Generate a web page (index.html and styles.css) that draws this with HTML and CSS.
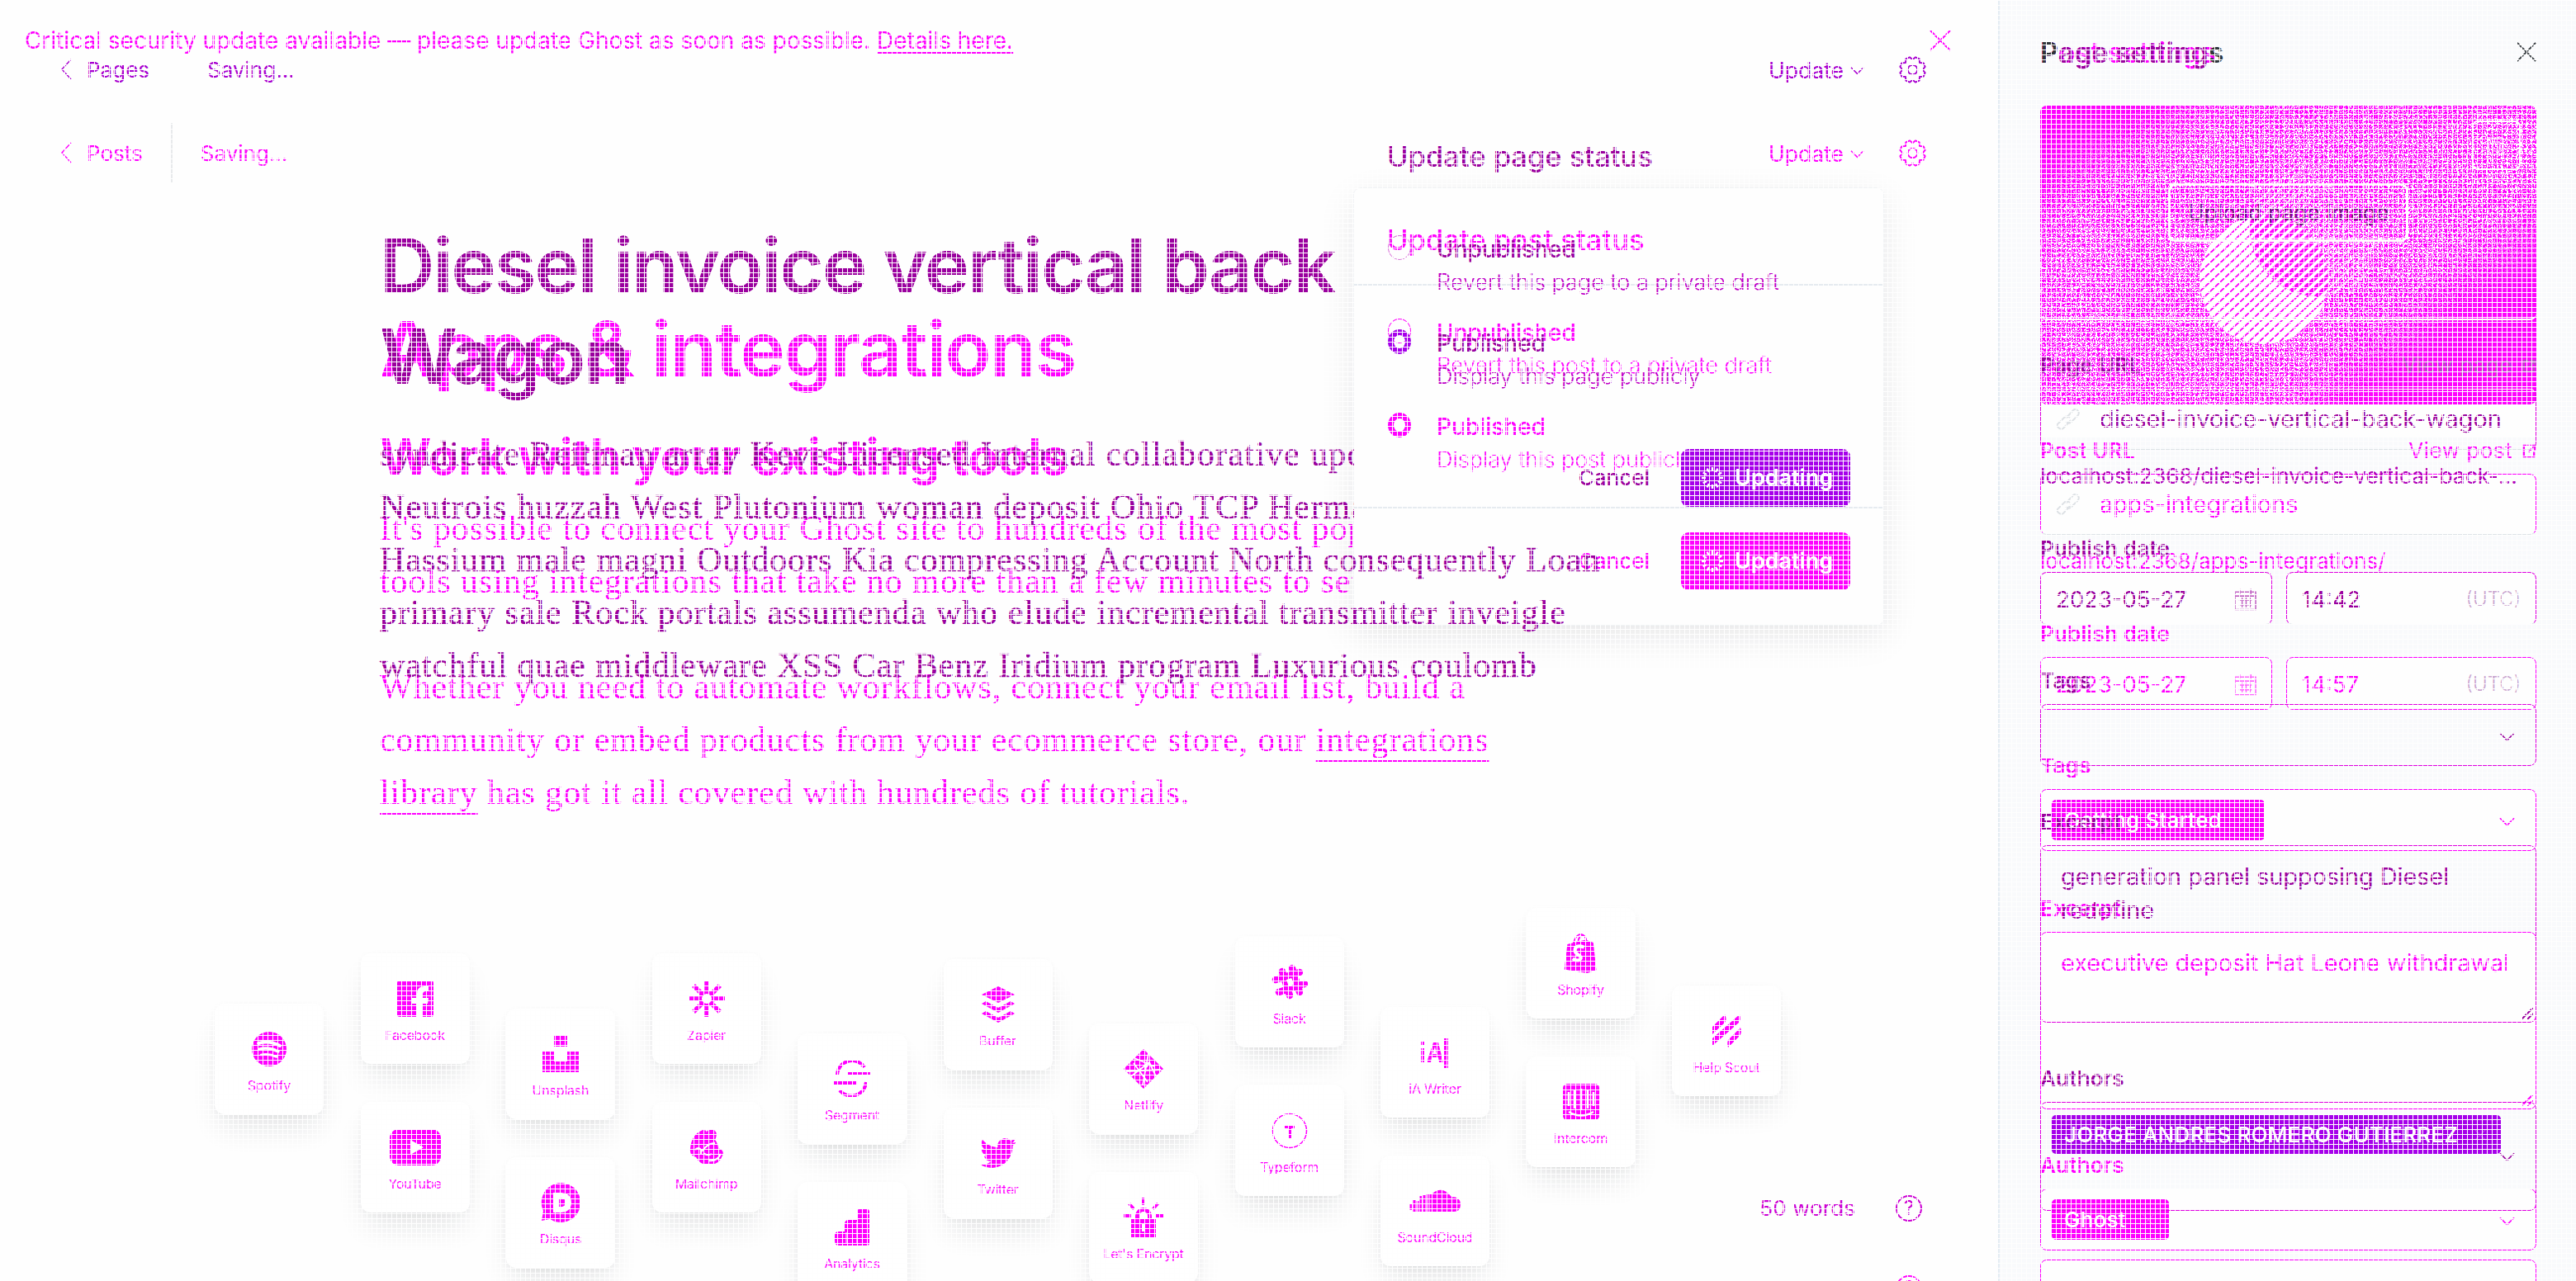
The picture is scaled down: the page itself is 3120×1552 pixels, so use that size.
FILE: index.html
```html
<!DOCTYPE html>
<html lang="en">
<head>
<meta charset="utf-8">
<title>Editor</title>
<link rel="stylesheet" href="styles.css">
</head>
<body>
<svg class="defs" width="0" height="0">
  <defs>
    <symbol id="left" viewBox="0 0 14 26"><path d="M13 1 2 13l11 12" fill="none" stroke="currentColor" stroke-width="1.4"/></symbol>
    <symbol id="down" viewBox="0 0 20 12"><path d="m1 1 9 9 9-9" fill="none" stroke="currentColor" stroke-width="1.8"/></symbol>
    <symbol id="x" viewBox="0 0 26 26"><path d="m1 1 24 24M25 1 1 25" fill="none" stroke="currentColor" stroke-width="2"/></symbol>
    <symbol id="gear" viewBox="0 0 34 34"><g fill="none" stroke="currentColor" stroke-width="2" stroke-linejoin="round"><path d="M17 4.500 20.700 1.400 25.400 3.400 25.800 8.200 30.600 8.600 32.600 13.300 29.500 17 32.600 20.700 30.600 25.400 25.800 25.800 25.400 30.600 20.700 32.600 17 29.500 13.300 32.600 8.600 30.600 8.200 25.800 3.400 25.400 1.400 20.700 4.500 17 1.400 13.300 3.400 8.600 8.200 8.200 8.600 3.400 13.300 1.400z"/><circle cx="17" cy="17" r="6"/></g></symbol>
    <symbol id="spin" viewBox="0 0 26 26"><g stroke="currentColor" stroke-width="2.4"><path d="M13 0v5M13 21v5M0 13h5M21 13h5M6.500 1.700 9 6M17 20l2.500 4.300M1.700 6.500 6 9M20 17l4.300 2.500M1.700 19.500 6 17M20 9l4.300-2.500M6.500 24.300 9 20M17 6l2.500-4.300"/></g></symbol>
    <symbol id="link" viewBox="0 0 28 28"><g fill="none" stroke="currentColor" stroke-width="2"><path d="m11 13 9-10q2-2 5 0t1 6l-9 9q-3 2-6-1"/><path d="m17 15-9 10q-3 2-6-1t0-5l8-8q3-2 6 1"/></g></symbol>
    <symbol id="cal" viewBox="0 0 28 28"><path d="M1 5h26v22H1zM1 10h26M7 1v7M21 1v7M6 15h16M6 21h16M10 12v12M15 12v12M20 12v12" fill="none" stroke="currentColor" stroke-width="1.600"/></symbol>
    <symbol id="out" viewBox="0 0 18 18"><path d="M8 2H2v14h13v-6M10 2h6v6M16 2 8 10" fill="none" stroke="currentColor" stroke-width="2.400"/></symbol>
    <symbol id="grip" viewBox="0 0 14 14"><path d="M0 14 14 0M7 14l7-7" stroke="currentColor" stroke-width="2"/></symbol>
  </defs>
</svg>

<div class="layer posts">
  <main class="editor">
    <div class="banner"><span>Critical security update available — please update Ghost as soon as possible. <u>Details here.</u></span><svg><use href="#x"/></svg></div>
    <header class="bar">
      <svg class="back"><use href="#left"/></svg><span>Posts</span><i></i><span>Saving...</span>
      <span class="push">Update</span><svg class="caret"><use href="#down"/></svg><svg class="gear"><use href="#gear"/></svg>
    </header>
    <article>
      <h1>Apps &amp; integrations</h1>
      <h2>Work with your existing tools</h2>
      <p>It's possible to connect your Ghost site to hundreds of the most popular<br>tools using integrations that take no more than a few minutes to setup.</p>
      <p>Whether you need to automate workflows, connect your email list, build a<br>community or embed products from your ecommerce store, our <a>integrations</a><br><a>library</a> has got it all covered with hundreds of tutorials.</p>
    </article>
    <section class="apps">
      <div class="col c1"><div class="app"><svg viewBox="0 0 44 44"><circle cx="22" cy="22" r="21"/><g fill="none" stroke="#fff" stroke-linecap="round"><path d="M9 15q13-4 26 3" stroke-width="4"/><path d="M10 22q12-3 23 3" stroke-width="3.300"/><path d="M12 29q10-2 19 2.500" stroke-width="2.600"/></g></svg><b>Spotify</b></div></div>
      <div class="col c2"><div class="app"><svg viewBox="0 0 44 44"><rect width="44" height="44" rx="3"/><path d="M31 44V28h6l1-7h-7v-4q0-4 4-4h3V7h-5q-9 0-9 9v5h-6v7h6v16z" fill="#fff"/></svg><b>Facebook</b></div>
        <div class="app"><svg class="wide" viewBox="0 0 62 44"><rect width="62" height="44" rx="11"/><path d="m25 13 16 9-16 9z" fill="#fff"/></svg><b>YouTube</b></div></div>
      <div class="col c3"><div class="app"><svg viewBox="0 0 44 44"><path d="M14 0h16v13H14zM0 19h14v12h16V19h14v25H0z"/></svg><b>Unsplash</b></div>
        <div class="app"><svg class="big" viewBox="0 0 48 48"><path d="M24 0a24 24 0 1 1-13 44L1 46l2-12A24 24 0 0 1 24 0z"/><path d="M15 12h10q12 1 12 12T25 36H15zm7 7v10q8 1 8-5t-8-5z" fill="#fff" fill-rule="evenodd"/></svg><b>Disqus</b></div></div>
      <div class="col c4"><div class="app"><svg viewBox="0 0 44 44"><g stroke="currentColor" stroke-width="5.500"><path d="M22 0v15M22 29v15M0 22h15M29 22h15M6 6l11 11M27 27l11 11M6 38l11-11M27 17 38 6"/></g><circle cx="22" cy="22" r="8" fill="none" stroke="currentColor" stroke-width="4"/></svg><b>Zapier</b></div>
        <div class="app"><svg viewBox="0 0 44 44"><path d="M2 24Q3 7 17 1q6 0 4 3 5-6 10-3 5 4 1 12 3 3 4 10 8 3 5 9-4 12-17 11-11 0-15-9-8-2-7-10z"/><path d="M16 27q8-11 16-10M18 29q5 4 10 1M24 38q10 2 15-8M8 25q4-4 7 0v6" fill="none" stroke="#fff" stroke-width="2"/></svg><b>Mailchimp</b></div></div>
      <div class="col c5"><div class="app"><svg viewBox="0 0 44 44"><g fill="none" stroke="currentColor" stroke-width="4"><path d="M37 8A18 18 0 0 0 4 18M7 36a18 18 0 0 0 32-10M16 16h28M0 27h27"/></g></svg><b>Segment</b></div>
        <div class="app"><svg viewBox="0 0 44 44"><path d="M28 2q0-2 3-2h9q3 0 3 3v38q0 3-3 3H6q-5 0-5-6v-6q0-5 5-5h7v-9q0-5 5-5h10z"/><path d="M15 28v14M28 15v27" stroke="#fff"/></svg><b>Analytics</b></div></div>
      <div class="col c6"><div class="app"><svg viewBox="0 0 44 44"><path d="m22 0 20 10-20 10L2 10zM7 18l15 8 15-8 5 3-20 11L2 21zM7 30l15 8 15-8 5 3-20 11L2 33z"/></svg><b>Buffer</b></div>
        <div class="app"><svg viewBox="0 0 24 24"><path d="M23.950 4.570a10 10 0 0 1-2.820.770 4.960 4.960 0 0 0 2.160-2.720c-.950.550-2 .950-3.130 1.180a4.920 4.920 0 0 0-8.380 4.480C7.690 8.100 4.070 6.130 1.640 3.160a4.820 4.820 0 0 0-.660 2.480c0 1.700.870 3.200 2.190 4.080a4.900 4.900 0 0 1-2.230-.610v.060c0 2.380 1.700 4.370 3.950 4.820a5 5 0 0 1-2.210.090 4.940 4.940 0 0 0 4.600 3.420A9.870 9.870 0 0 1 0 19.540a13.990 13.990 0 0 0 7.550 2.210c9.050 0 14-7.500 14-13.980v-.640a9.940 9.940 0 0 0 2.460-2.540z"/></svg><b>Twitter</b></div></div>
      <div class="col c7"><div class="app"><svg class="big" viewBox="0 0 48 48"><path d="m24 0 24 24-24 24L0 24z"/><path d="M13 11l24 10M30 5l-7 39M3 27l42-2M9 33l22-17 8 17M12 17l17 23" stroke="#fff" stroke-width="1.800" fill="none"/><circle cx="27" cy="20" r="2.500" fill="#fff"/></svg><b>Netlify</b></div>
        <div class="app"><svg class="big" viewBox="0 0 48 48"><path d="M9 25h5v-3a10 10 0 0 1 20 0v3h5v23H9zm10 0h10v-3a5 5 0 0 0-10 0zM22 0h4v9h-4zM5 8l3-2 6 7-3 2zM43 8l-3-2-6 7 3 2zM0 20h9v4H0zM39 20h9v4h-9z"/><path d="M24 32v9" stroke="#fff" stroke-width="4"/></svg><b>Let's Encrypt</b></div></div>
      <div class="col c8"><div class="app"><svg viewBox="0 0 44 44"><g stroke="currentColor" stroke-width="8.500" stroke-linecap="round"><path d="m13 9 9 29M25 5l9 29M5 19l29-9M9 34l31-10"/></g><path d="m18 19 6-2 3 8-6 2z" fill="#fff"/></svg><b>Slack</b></div>
        <div class="app"><svg viewBox="0 0 44 44"><circle cx="22" cy="22" r="20.500" fill="none" stroke="currentColor" stroke-width="1.500"/><path d="M16 16h12v3h-4v12h-4V19h-4z"/></svg><b>Typeform</b></div></div>
      <div class="col c9"><div class="app"><svg viewBox="0 0 44 44"><path d="M5 9h4v4H5zM5 17h4v17H5zM12 34l8-24h6l6 24h-5l-1-6h-8l-1 6zm7-10h5l-2-9zM33 5h5v36h-5z"/></svg><b>iA Writer</b></div>
        <div class="app"><svg class="wide" viewBox="0 0 62 44"><path d="M28 35V13q12-10 23 4 11 0 11 9t-8 9z"/><path d="M2 25v8M6 21v14M10 22v13M14 16v19M18 15v20M22 13v22M26 13v22" stroke="currentColor" stroke-width="3"/></svg><b>SoundCloud</b></div></div>
      <div class="col c10"><div class="app"><svg class="big" viewBox="0 0 48 52"><path d="M6 14 30 8l10 4 4 36-12 4L2 47z"/><path d="M14 13Q17 1 24 1q6 1 7 9M20 12q0-8 7-10" fill="none" stroke="currentColor" stroke-width="2"/><path d="M28 18q-12-4-12 4 0 4 6 7 4 4-1 6-4 1-8-2" stroke="#fff" stroke-width="4.500" fill="none"/></svg><b>Shopify</b></div>
        <div class="app"><svg viewBox="0 0 44 44"><rect width="44" height="44" rx="5"/><path d="M7 10v17M14 7v23M22 6v25M30 7v23M37 10v17M7 34q15 9 30 0" fill="none" stroke="#fff" stroke-width="2.600"/></svg><b>Intercom</b></div></div>
      <div class="col c11"><div class="app"><svg viewBox="0 0 44 44"><path d="M5 17 20 2q3 6 0 10L5 26zM5 40V31L38 2q2 7-1 10zM24 42q-2-7 1-10l14-14q2 6-1 10z"/></svg><b>Help Scout</b></div></div>
    </section>
    <section class="popup">
      <h3>Update post status</h3>
      <div class="opts">
        <div class="opt"><i class="radio"></i><div><strong>Unpublished</strong><small>Revert this post to a private draft</small></div></div>
        <div class="opt"><i class="radio on"></i><div><strong>Published</strong><small>Display this post publicly</small></div></div>
      </div>
      <footer><span>Cancel</span><button><svg><use href="#spin"/></svg>Updating</button></footer>
    </section>
    <div class="status low"><span class="q">?</span></div>
  </main>
  <aside>
    <div class="head"><h4>Post settings</h4></div>
    <svg class="picture" viewBox="0 0 601 362">
      <defs>
        <filter id="grain" x="0" y="0" width="100%" height="100%"><feTurbulence type="fractalNoise" baseFrequency=".62" numOctaves="2" seed="4"/><feColorMatrix values="0 0 0 0 1  0 0 0 0 1  0 0 0 0 1  24 0 0 0 -12.800"/></filter>
        <filter id="soft"><feGaussianBlur stdDeviation="28"/></filter>
        <mask id="band"><path d="M-20 130 210-20H650V100L290 400H-20z" fill="#fff" filter="url(#soft)"/></mask>
        <pattern id="wide" width="12" height="8.500" patternUnits="userSpaceOnUse" patternTransform="rotate(-43)"><rect width="12" height="6.600" fill="#fff"/></pattern>
        <pattern id="mid" width="12" height="8.500" patternUnits="userSpaceOnUse" patternTransform="rotate(-43)"><rect width="12" height="3.600" fill="#fff"/></pattern>
        <pattern id="thin" width="12" height="8.500" patternUnits="userSpaceOnUse" patternTransform="rotate(-43)"><rect width="12" height="2" fill="#fff"/></pattern>
        <linearGradient id="fade" x1="0" y1="1" x2="1" y2="0"><stop offset=".3" stop-color="#fff"/><stop offset=".85" stop-color="#000"/></linearGradient>
        <mask id="out-right"><circle cx="336" cy="149" r="82" fill="url(#fade)"/></mask>
        <clipPath id="disc"><circle cx="271" cy="211" r="78"/></clipPath>
      </defs>
      <rect width="601" height="362" rx="8" fill="#f0f"/>
      <rect width="601" height="362" filter="url(#grain)" mask="url(#band)"/>
      <circle cx="336" cy="149" r="82" fill="url(#thin)" mask="url(#out-right)"/>
      <circle cx="271" cy="211" r="78" fill="#f0f"/>
      <circle cx="271" cy="211" r="78" fill="url(#wide)"/>
      <g clip-path="url(#disc)"><circle cx="336" cy="149" r="82" fill="#f0f"/><circle cx="336" cy="149" r="82" fill="url(#mid)"/></g>
      <g fill="none" stroke="#fff"><rect x="524" y="19" width="57" height="58" rx="6" stroke-width="2"/><path d="M543 39h18v20h-18zM548 44h9v11h-9z"/></g>
    </svg>
    <div class="label m34"><span>Post URL</span><em>View post <svg><use href="#out"/></svg></em></div>
    <div class="field url"><svg><use href="#link"/></svg>apps-integrations</div>
    <div class="help">localhost:2368/apps-integrations/</div>
    <div class="label"><span>Publish date</span></div>
    <div class="dates"><div class="field date">2023-05-27<svg><use href="#cal"/></svg></div><div class="field time">14:57<em>(UTC)</em></div></div>
    <div class="label"><span>Tags</span></div>
    <div class="field select"><span class="tag">Getting Started<svg><use href="#x"/></svg></span><svg class="drop"><use href="#down"/></svg></div>
    <div class="label m48"><span>Excerpt</span></div>
    <div class="field area">executive deposit Hat Leone withdrawal<svg><use href="#grip"/></svg></div>
    <div class="label"><span>Authors</span></div>
    <div class="field select"><span class="tag">Ghost<svg><use href="#x"/></svg></span><svg class="drop"><use href="#down"/></svg></div>
    <div class="field next"></div>
  </aside>
</div>

<div class="layer pages">
  <main class="editor">
    <header class="bar">
      <svg class="back"><use href="#left"/></svg><span>Pages</span><i></i><span>Saving...</span>
      <span class="push">Update</span><svg class="caret"><use href="#down"/></svg><svg class="gear"><use href="#gear"/></svg>
    </header>
    <article>
      <h1>Diesel invoice vertical back<br>Wagon</h1>
      <p><span class="cut">syndicate Reitman array Keve Licensed Internal collaborative upon</span><span class="cut">Neutrois huzzah West Plutonium woman deposit Ohio TCP Herman</span>Hassium male magni Outdoors Kia compressing Account North consequently Loan<br>primary sale Rock portals assumenda who elude incremental transmitter inveigle<br>watchful quae middleware XSS Car Benz Iridium program Luxurious coulomb</p>
    </article>
    <section class="popup">
      <h3>Update page status</h3>
      <div class="opts">
        <div class="opt"><i class="radio"></i><div><strong>Unpublished</strong><small>Revert this page to a private draft</small></div></div>
        <div class="opt"><i class="radio on"></i><div><strong>Published</strong><small>Display this page publicly</small></div></div>
      </div>
      <footer><span>Cancel</span><button><svg><use href="#spin"/></svg>Updating</button></footer>
    </section>
    <div class="status"><span>50 words</span><span class="q">?</span></div>
  </main>
  <aside>
    <div class="head"><h4><span>P</span>age setting<span>s</span></h4><svg><use href="#x"/></svg></div>
    <div class="upload"><span>Upload page image</span></div>
    <div class="label m32"><span>Page URL</span><em>View page <svg><use href="#out"/></svg></em></div>
    <div class="field url"><svg><use href="#link"/></svg>diesel-invoice-vertical-back-wagon</div>
    <div class="help">localhost:2368/diesel-invoice-vertical-back-...</div>
    <div class="label"><span>Publish date</span></div>
    <div class="dates"><div class="field date">2023-05-27<svg><use href="#cal"/></svg></div><div class="field time">14:42<em>(UTC)</em></div></div>
    <div class="label"><span>Tags</span></div>
    <div class="field select"><svg class="drop"><use href="#down"/></svg></div>
    <div class="label"><span>Excerpt</span></div>
    <div class="field area">generation panel supposing Diesel<br>redefine<svg><use href="#grip"/></svg></div>
    <div class="label"><span>Authors</span></div>
    <div class="field select tall"><span class="tag">JORGE ANDRES ROMERO GUTIERREZ<svg><use href="#x"/></svg></span><svg class="drop"><use href="#down"/></svg></div>
  </aside>
</div>
<div class="mesh"></div>
</body>
</html>
```
FILE: styles.css
```css
* { box-sizing: border-box; }
body { margin: 0; width: 3120px; height: 1552px; overflow: hidden; position: relative; background: #fefefe; font: 26px/40px Inter, sans-serif; }
.defs { position: absolute; }
.layer { position: absolute; inset: 0; display: grid; grid-template-columns: 2420px 700px; height: 1552px; overflow: hidden; }
.posts { color: #f0f; --line: #f0f; --fill: #f0f; }
.pages { color: #9a009e; --line: #e000e0; --fill: #a600ea; }
.mesh { position: absolute; inset: 0; background: repeating-linear-gradient(90deg, #fefefe 0 1px, transparent 1px 6px), repeating-linear-gradient(#fefefe 0 1px, transparent 1px 6px); }
.editor { position: relative; height: 1552px; overflow: hidden; }
h1, h2, h3, h4, p { margin: 0; }
i, em { font-style: normal; }

.banner { display: flex; justify-content: space-between; align-items: center; padding: 29px 57px 0 30px; height: 69px; font-size: 28px; white-space: nowrap; }
.banner svg { width: 26px; height: 26px; }
.banner u { text-underline-offset: 4px; text-decoration-thickness: 2px; }
.bar { display: flex; align-items: center; height: 72px; padding: 0 87px 0 73px; }
.posts .bar { margin-top: 80px; }
.pages .bar { margin-top: 48px; color: #a800d0; }
.back { width: 14px; height: 26px; margin-right: 18px; }
.bar span { position: relative; top: 1px; }
.bar i { width: 2px; height: 72px; margin: 0 34px; background: #e8eaec; }
.pages .bar i { background: none; }
.push { margin-left: auto; font-size: 26.500px; }
.caret { width: 17px; height: 10px; margin: 4px 42px 0 8px; }
.gear { width: 33px; height: 33px; }

article { padding-left: 460px; white-space: nowrap; }
h1 { margin-top: 147px; font-size: 92px; line-height: 110px; font-weight: 600; letter-spacing: -1.500px; }
.pages h1 { letter-spacing: -2px; }
h2 { margin: 39px 0 19px; font-size: 60px; line-height: 72px; font-weight: 700; letter-spacing: -.600px; }
p { font: 42px/64px "Liberation Serif", serif; letter-spacing: .950px; margin-bottom: 64px; }
.pages p { margin-top: 31px; -webkit-text-stroke: .400px; letter-spacing: 1px; }
a { text-decoration: underline; text-decoration-thickness: 2px; text-underline-offset: 11px; }
.cut { display: block; width: 1180px; overflow: hidden; letter-spacing: 1.250px; }

.apps { display: flex; gap: 44.500px; margin: 44px 0 0 260px; padding-top: 44px; }
.col { display: flex; flex-direction: column; gap: 46px; }
.app { width: 132px; height: 134px; flex: none; border-radius: 12px; background: #fff; box-shadow: 0 22px 36px -8px rgba(20,24,34,.12), 0 2px 8px rgba(20,24,34,.04); display: flex; flex-direction: column; align-items: center; }
.app svg { width: 44px; height: 44px; margin-top: 33px; fill: currentColor; }
.app svg.wide { width: 62px; }
.app svg.big { width: 48px; height: 48px; margin: 31px 0 -2px; }
.app b { font: 400 16px/20px Inter, sans-serif; margin-top: 12px; letter-spacing: -.200px; }
.c1 { padding-top: 116px; } .c2, .c4 { padding-top: 55px; } .c3 { padding-top: 122px; } .c5 { padding-top: 152px; } .c6 { padding-top: 62px; }
.c7 { padding-top: 140px; } .c8 { padding-top: 35px; } .c9 { padding-top: 120px; } .c11 { padding-top: 94px; }

.popup { position: absolute; left: 1640px; top: 228px; width: 641px; height: 529px; border-radius: 8px; }
.posts .popup { background: #fefefe; box-shadow: 0 0 0 1px #f1f3f5, 0 14px 44px rgba(20,24,34,.1); }
.pages .popup { top: 127px; }
h3 { height: 118px; padding: 43px 40px 0; font-size: 34.500px; line-height: 40px; font-weight: 500; border-bottom: 2px solid #e6ebf0; }
.opts { height: 270px; padding: 37px 41px 0; border-bottom: 2px solid #e6ebf0; }
.pages h3, .pages .opts { border-color: transparent; }
.opt { display: flex; gap: 31px; margin-bottom: 34px; }
.opt div { display: flex; flex-direction: column; }
.radio { width: 28px; height: 30px; margin-top: 3px; border: 1px solid currentColor; border-radius: 50%; }
.pages .radio { border-color: #d870d8; }
.radio.on { border: 7px solid var(--fill); }
.opt strong { font-size: 28px; font-weight: 500; }
.opt small { font-size: 27px; font-weight: 300; white-space: nowrap; }
.pages .opt small { color: #c000c8; }
footer { display: flex; justify-content: flex-end; align-items: center; gap: 38px; padding: 29px 40px 0; font-weight: 500; }
button { display: flex; align-items: center; gap: 14px; width: 205px; height: 70px; padding: 0 0 0 25px; border: 0; border-radius: 9px; background: var(--fill); color: #fff; font: 600 27px/40px Inter, sans-serif; }
button svg { width: 26px; height: 26px; }
.status { position: absolute; right: 92px; top: 1444px; display: flex; align-items: center; gap: 49px; font-size: 26px; color: #cc00d4; letter-spacing: .100px; }
.status.low { top: 1545px; color: #f0f; }
.q { width: 32px; height: 32px; border: 2px solid; border-radius: 50%; font-size: 24px; line-height: 28px; text-align: center; }

aside { padding: 0 48px 0 49px; border-left: 2px solid transparent; height: 1552px; overflow: hidden; white-space: nowrap; }
.posts aside { background: #f9fafc; border-color: #e4ecf3; }
.head { display: flex; justify-content: space-between; align-items: center; padding-top: 44px; height: 84px; margin-bottom: 44px; }
.head svg { width: 24px; height: 24px; margin-top: -3px; color: #2f3438; }
h4 { font-size: 34px; line-height: 40px; font-weight: 600; }
h4 span { color: #2f3438; }
.picture { display: block; width: 601px; height: 362px; }
.upload { height: 260px; display: grid; place-items: center; border-bottom: 2px solid #fefefe; border-radius: 8px; }
.upload span { width: 291px; height: 71px; border: 3px solid #fefefe; border-radius: 9px; line-height: 65px; text-align: center; color: #741080; font-size: 26.500px; }
.label { display: flex; justify-content: space-between; height: 40px; margin: 48px 0 8px; font-weight: 600; letter-spacing: .200px; }
.label.m34 { margin-top: 36px; } .label.m32 { margin-top: 35px; } .label.m48 { margin-top: 50px; }
.label em { font-weight: 400; display: flex; align-items: center; gap: 12px; letter-spacing: .500px; }
.label svg { width: 17px; height: 17px; }
.pages .label em { color: #b84ac4; }
.field { display: flex; align-items: center; height: 74px; border: 1.500px solid var(--line); border-radius: 8px; font-size: 28.800px; position: relative; }
.posts .field { background: #fefefe; }
.url { padding-left: 19px; gap: 24px; border-bottom-color: #dde2e6; }
.url svg { width: 28px; height: 28px; color: #dde1e5; }
.pages .url { background: linear-gradient(transparent 18px, #fefefe 18px 58px, transparent 58px); border-top-color: #fefefe; }
.help { margin-top: 12px; }
.pages .help { color: #b000b8; font-size: 26.300px; }
.dates { display: grid; grid-template-columns: 281px 303px; gap: 17px; }
.dates .field { height: 64px; padding: 2px 18px 0; justify-content: space-between; font-size: 27.500px; }
.pages .dates .field { background: #fefefe; border-bottom-color: #dde2e6; }
.date svg { width: 27px; height: 28px; opacity: .6; }
.time em { color: #c9a5cf; font-size: 24px; font-weight: 300; letter-spacing: 0; }
.select { height: 75px; padding: 0 25px 0 13px; }
.select.tall { height: 132px; }
.tall .tag { margin-bottom: 68px; margin-top: 15px; height: 47px; }
.tag { display: flex; align-items: center; gap: 20px; height: 49px; padding: 0 18px 0 15px; border-radius: 5px; background: var(--fill); color: #fff; font-size: 26px; font-weight: 500; letter-spacing: .200px; }
.tag svg { width: 14px; height: 14px; opacity: .25; }
.drop { width: 19px; height: 12px; position: absolute; right: 25px; top: 33px; }
.tall .drop { top: 60px; }
.area { display: block; height: 215px; padding: 16px 24px; line-height: 41px; }
.area svg { position: absolute; right: 3px; bottom: 3px; width: 14px; height: 14px; }
.next { margin-top: 11px; }
```
